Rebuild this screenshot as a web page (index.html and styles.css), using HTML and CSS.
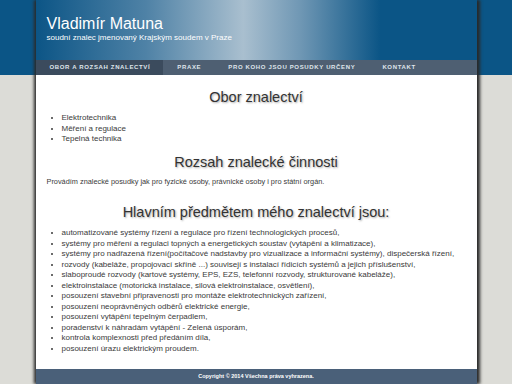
FILE: index.html
```html
<!DOCTYPE html>
<html>
<head>
    <meta charset="utf-8">
    <title>Vladimír Matuna - soudní znalec</title>
    <link rel="stylesheet" href="styles.css">
</head>
<body>
    <div class="page">
        <div class="header">
            <h1>Vladimír Matuna</h1>
            <p class="sub">soudní znalec jmenovaný Krajským soudem v Praze</p>
        </div>
        <ul class="menu">
            <li class="active">Obor a rozsah znalectví</li>
            <li>Praxe</li>
            <li>Pro koho jsou posudky určeny</li>
            <li>Kontakt</li>
        </ul>

        <div class="content">
            <h2>Obor znalectví</h2>
            <ul class="first">
                <li>Elektrotechnika</li>
                <li>Měření a regulace</li>
                <li>Tepelná technika</li>
            </ul>

            <h2 class="second">Rozsah znalecké činnosti</h2>
            <p class="note">Provádím znalecké posudky jak pro fyzické osoby, právnické osoby i pro státní orgán.</p>

            <h2 class="third">Hlavním předmětem mého znalectví jsou:</h2>
            <ul>
                <li>automatizované systémy řízení a regulace pro řízení technologických procesů,</li>
                <li>systémy pro měření a regulaci topných a energetických soustav (vytápění a klimatizace),</li>
                <li>systémy pro nadřazená řízení(počítačové nadstavby pro vizualizace a informační systémy), dispečerská řízení,</li>
                <li>rozvody (kabeláže, propojovací skříně ...) souvisejí s instalací řídicích systémů a jejich příslušenství,</li>
                <li>slaboproudé rozvody (kartové systémy, EPS, EZS, telefonní rozvody, strukturované kabeláže),</li>
                <li>elektroinstalace (motorická instalace, silová elektroinstalace, osvětlení),</li>
                <li>posouzení stavební připravenosti pro montáže elektrotechnických zařízení,</li>
                <li>posouzení neoprávněných odběrů elektrické energie,</li>
                <li>posouzení vytápění tepelným čerpadlem,</li>
                <li>poradenství k náhradám vytápění - Zelená úsporám,</li>
                <li>kontrola komplexnosti před předáním díla,</li>
                <li>posouzení úrazu elektrickým proudem.</li>
            </ul>
        </div>

        <div class="footer">Copyright © 2014 Všechna práva vyhrazena.</div>
    </div>
</body>
</html>
```

FILE: styles.css
```css
body { margin: 0; font-family: "Liberation Sans", Arial, sans-serif; color: #3a3a3a;
       background: linear-gradient(#0b5586 0, #0b5586 75px, #dcdcd7 75px); }
.page { width: 441px; margin: 0 auto; background: white;
        box-shadow: -2px 0 3px #2a2a2a, 3px 0 3px #2a2a2a; }

.header { height: 60px; padding-left: 11px; box-sizing: border-box;
          background: linear-gradient(to right, #0c5586 0%, #4f82a6 25%, #a9bfcf 47%, #6f97b4 60%, #0b5586 78%, #0b5586 100%); }
.header h1 { margin: 0; padding-top: 14px; font-size: 16px; line-height: 19px; font-weight: normal; color: white; }
.header .sub { margin: 0; font-size: 8px; line-height: 10px; color: white; }

.menu { display: flex; margin: 0; padding: 0; list-style: none; height: 15px; background: #4e5f72; }
.menu li { padding: 0 13px 0 14px; line-height: 15px; font-size: 6px; font-weight: bold; letter-spacing: .65px;
           text-transform: uppercase; color: #dfe5eb; }
.menu li.active { background: #3b4b5d; }

.content { padding: 14px 11px 15px; }
.content h2 { margin: 0; font-size: 14.5px; line-height: 17px; font-weight: normal; text-align: center;
              color: #333; text-shadow: 1px 1px 2px #aaa; }
.content h2.second { margin-top: 9px; }
.content h2.third { margin-top: 16.5px; }
.content ul { margin: 7.5px 0 0; padding-left: 15px; font-size: 8px; line-height: 10.5px; }
.content ul.first { margin-top: 7px; }
.note { margin: 6.5px 0 0; font-size: 7.35px; line-height: 10px; }

.footer { height: 15px; line-height: 15px; background: #4a6079; color: white; text-align: center;
          font-size: 5.5px; font-weight: bold; }
```
